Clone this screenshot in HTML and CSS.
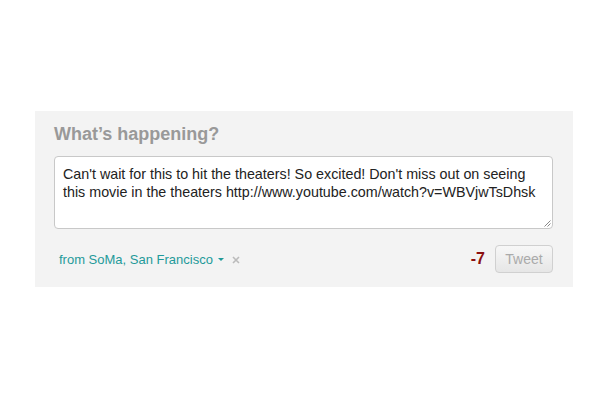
FILE: index.html
```html
<!DOCTYPE html>
<html>
<head>
<meta charset="utf-8">
<link rel="stylesheet" href="styles.css">
</head>
<body>
<div class="box">
  <h2 class="title">What’s happening?</h2>
  <div class="editor">
    <div class="text">Can't wait for this to hit the theaters! So excited! Don't miss out on seeing this movie in the theaters http://www.youtube.com/watch?v=WBVjwTsDhsk</div>
    <svg class="grip" width="8" height="8" viewBox="0 0 8 8"><path d="M7.5 1.5L1.5 7.5M7.5 4.5L4.5 7.5" stroke="#888" stroke-width="1" fill="none"/></svg>
  </div>
  <div class="footer">
    <div class="geo">
      <span class="place">from SoMa, San Francisco</span>
      <span class="caret"></span>
      <svg class="close" width="8" height="8" viewBox="0 0 8 8"><path d="M1 1L7 7M7 1L1 7" stroke="#bbb" stroke-width="1.6" fill="none"/></svg>
    </div>
    <div class="actions">
      <span class="count">-7</span>
      <button class="tweet">Tweet</button>
    </div>
  </div>
</div>
</body>
</html>
```
FILE: styles.css
```css
html, body {
  margin: 0;
  padding: 0;
  background: #fff;
  font-family: "Liberation Sans", Arial, sans-serif;
}
.box {
  margin: 111px 0 0 35px;
  width: 538px;
  height: 176px;
  box-sizing: border-box;
  background: #f3f3f3;
  padding: 12px 20px 0 19px;
}
.title {
  margin: 0 0 11px;
  font-size: 18px;
  line-height: 22px;
  font-weight: bold;
  color: #999;
}
.editor {
  position: relative;
  height: 73px;
  box-sizing: border-box;
  background: #fff;
  border: 1px solid #c8c8c8;
  border-radius: 4px;
  padding: 8px 8px;
}
.text {
  font-size: 14.3px;
  line-height: 18px;
  color: #222;
}
.grip {
  position: absolute;
  right: 1px;
  bottom: 1px;
}
.footer {
  display: flex;
  justify-content: space-between;
  align-items: center;
  margin-top: 16px;
}
.geo {
  display: flex;
  align-items: center;
  padding-left: 5px;
  font-size: 13px;
  color: #1f9a9a;
}
.caret {
  width: 0;
  height: 0;
  margin-left: 5px;
  margin-top: 1px;
  border-left: 3.5px solid transparent;
  border-right: 3.5px solid transparent;
  border-top: 3.5px solid #1f9a9a;
}
.close {
  margin-left: 8px;
  margin-top: 2px;
}
.actions {
  display: flex;
  align-items: center;
}
.count {
  font-size: 16px;
  font-weight: bold;
  color: #8b1010;
  margin-right: 10px;
}
.tweet {
  width: 58px;
  height: 28px;
  border: 1px solid #d0d0d0;
  border-radius: 4px;
  background: linear-gradient(#f7f7f7, #e6e6e6);
  color: #aaa;
  font-family: "Liberation Sans", Arial, sans-serif;
  font-size: 14px;
  padding: 0;
}
```
